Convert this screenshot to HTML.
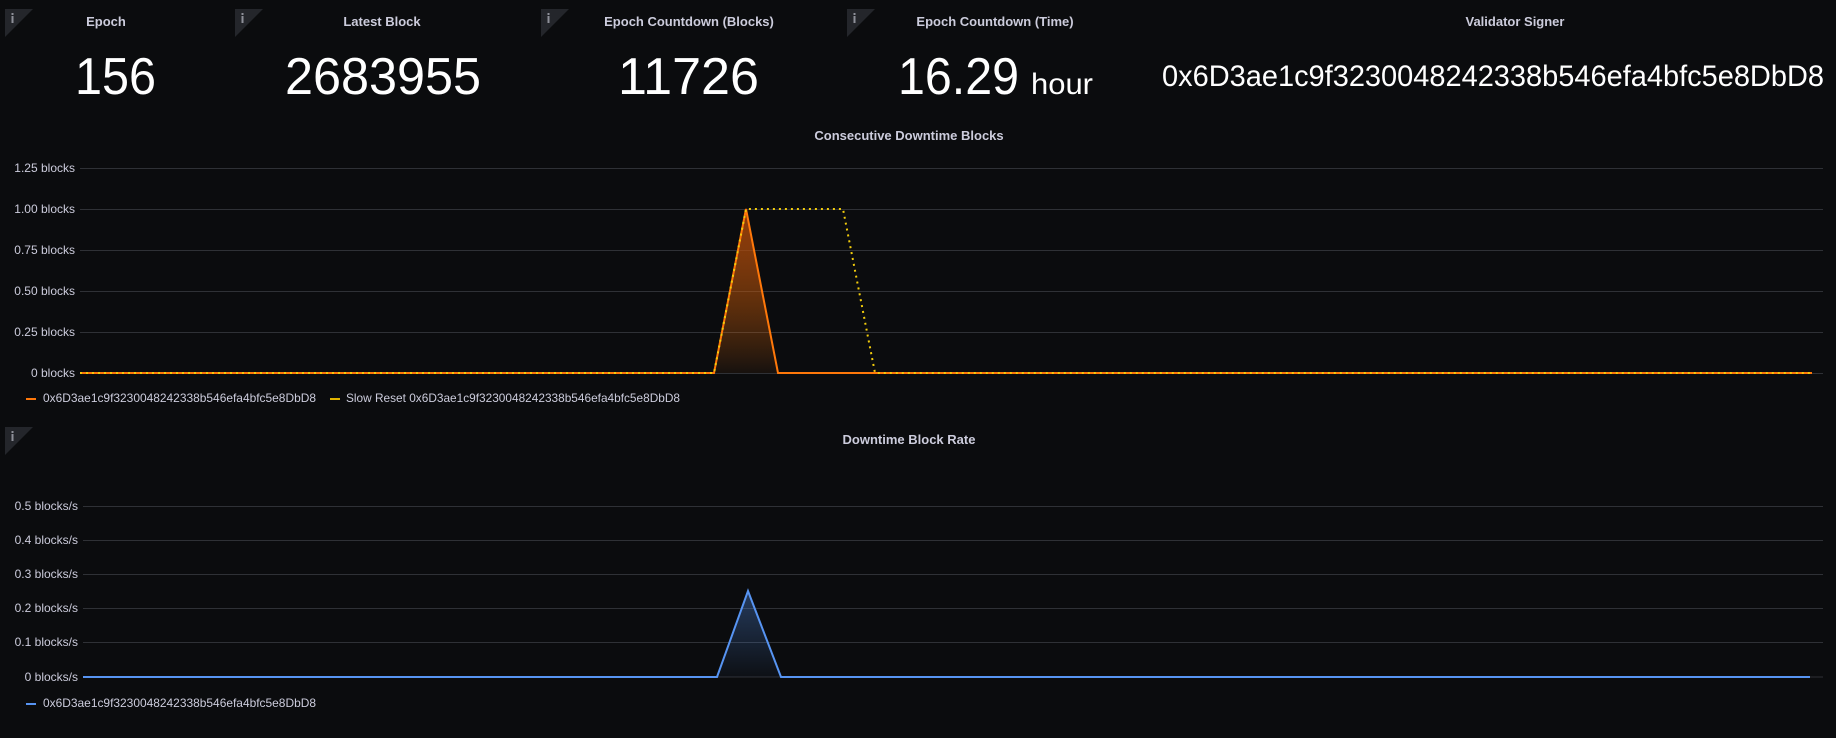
<!DOCTYPE html>
<html><head><meta charset="utf-8"><style>
html,body{margin:0;padding:0;background:#0b0c0e;}
svg{display:block;}
text{font-family:"Liberation Sans",sans-serif;}
</style></head><body>
<svg width="1836" height="738" viewBox="0 0 1836 738" xmlns="http://www.w3.org/2000/svg">
<defs>
<linearGradient id="og" x1="0" y1="0" x2="0" y2="1"><stop offset="0" stop-color="#a0400a" stop-opacity="0.9"/><stop offset="1" stop-color="#ff780a" stop-opacity="0.05"/></linearGradient>
<linearGradient id="bg" x1="0" y1="0" x2="0" y2="1"><stop offset="0" stop-color="#5794f2" stop-opacity="0.35"/><stop offset="1" stop-color="#5794f2" stop-opacity="0.03"/></linearGradient>
<g id="info"><polygon points="0,0 28,0 0,28" fill="#24262b"/><rect x="6.5" y="7" width="2" height="7" fill="#8e9099"/><rect x="6.5" y="4" width="2" height="2" fill="#8e9099"/></g>
</defs>
<rect width="1836" height="738" fill="#0b0c0e"/>
<use href="#info" x="5" y="9"/><use href="#info" x="235" y="9"/><use href="#info" x="541" y="9"/><use href="#info" x="847" y="9"/>
<g fill="#ccccdc" font-size="13" font-weight="bold" text-anchor="middle">
<text x="106" y="26">Epoch</text>
<text x="382" y="26">Latest Block</text>
<text x="689" y="26">Epoch Countdown (Blocks)</text>
<text x="995" y="26">Epoch Countdown (Time)</text>
<text x="1515" y="26">Validator Signer</text>
</g>
<g fill="#ffffff" font-size="52">
<text x="75" y="94" textLength="81" lengthAdjust="spacingAndGlyphs">156</text>
<text x="285" y="94" textLength="196" lengthAdjust="spacingAndGlyphs">2683955</text>
<text x="618" y="94" textLength="141" lengthAdjust="spacingAndGlyphs">11726</text>
<text x="898" y="94" textLength="121" lengthAdjust="spacingAndGlyphs">16.29</text>
<text x="1031" y="94" font-size="30" textLength="62" lengthAdjust="spacingAndGlyphs">hour</text>
<text x="1162" y="86" font-size="30" textLength="662" lengthAdjust="spacingAndGlyphs">0x6D3ae1c9f3230048242338b546efa4bfc5e8DbD8</text>
</g>
<text x="909" y="140" fill="#ccccdc" font-size="13" font-weight="bold" text-anchor="middle">Consecutive Downtime Blocks</text>
<g stroke="#2f3136" stroke-width="1">
<line x1="80" y1="168.5" x2="1823" y2="168.5"/><line x1="80" y1="209.5" x2="1823" y2="209.5"/><line x1="80" y1="250.5" x2="1823" y2="250.5"/><line x1="80" y1="291.5" x2="1823" y2="291.5"/><line x1="80" y1="332.5" x2="1823" y2="332.5"/><line x1="80" y1="373.5" x2="1823" y2="373.5"/>
</g>
<g fill="#ccccdc" font-size="12" text-anchor="end">
<text x="75" y="172">1.25 blocks</text><text x="75" y="213">1.00 blocks</text><text x="75" y="254">0.75 blocks</text><text x="75" y="295">0.50 blocks</text><text x="75" y="336">0.25 blocks</text><text x="75" y="377">0 blocks</text>
</g>
<polygon points="714,373 746,209 778,373" fill="url(#og)"/>
<polyline points="80,373 714,373 746,209 778,373 1812,373" fill="none" stroke="#ff780a" stroke-width="2"/>
<polyline points="80,373 714,373 746,209 843,209 875,373 1812,373" fill="none" stroke="#f2cc0c" stroke-width="2" stroke-dasharray="2,4"/>
<rect x="26" y="398" width="10" height="2" fill="#ff780a"/>
<text x="43" y="402" fill="#ccccdc" font-size="12" textLength="273" lengthAdjust="spacingAndGlyphs">0x6D3ae1c9f3230048242338b546efa4bfc5e8DbD8</text>
<rect x="330" y="398" width="10" height="2" fill="#e0b400"/>
<text x="346" y="402" fill="#ccccdc" font-size="12" textLength="334" lengthAdjust="spacingAndGlyphs">Slow Reset 0x6D3ae1c9f3230048242338b546efa4bfc5e8DbD8</text>
<use href="#info" x="5" y="427"/>
<text x="909" y="444" fill="#ccccdc" font-size="13" font-weight="bold" text-anchor="middle">Downtime Block Rate</text>
<g stroke="#2f3136" stroke-width="1">
<line x1="83" y1="506.5" x2="1823" y2="506.5"/><line x1="83" y1="540.5" x2="1823" y2="540.5"/><line x1="83" y1="574.5" x2="1823" y2="574.5"/><line x1="83" y1="608.5" x2="1823" y2="608.5"/><line x1="83" y1="642.5" x2="1823" y2="642.5"/><line x1="83" y1="677" x2="1823" y2="677"/>
</g>
<g fill="#ccccdc" font-size="12" text-anchor="end">
<text x="78" y="510">0.5 blocks/s</text><text x="78" y="544">0.4 blocks/s</text><text x="78" y="578">0.3 blocks/s</text><text x="78" y="612">0.2 blocks/s</text><text x="78" y="646">0.1 blocks/s</text><text x="78" y="681">0 blocks/s</text>
</g>
<polygon points="717,677 748,591 781,677" fill="url(#bg)"/>
<polyline points="83,677 717,677 748,591 781,677 1810,677" fill="none" stroke="#5794f2" stroke-width="2"/>
<rect x="26" y="703" width="10" height="2" fill="#5794f2"/>
<text x="43" y="707" fill="#ccccdc" font-size="12" textLength="273" lengthAdjust="spacingAndGlyphs">0x6D3ae1c9f3230048242338b546efa4bfc5e8DbD8</text>
</svg>
</body></html>
